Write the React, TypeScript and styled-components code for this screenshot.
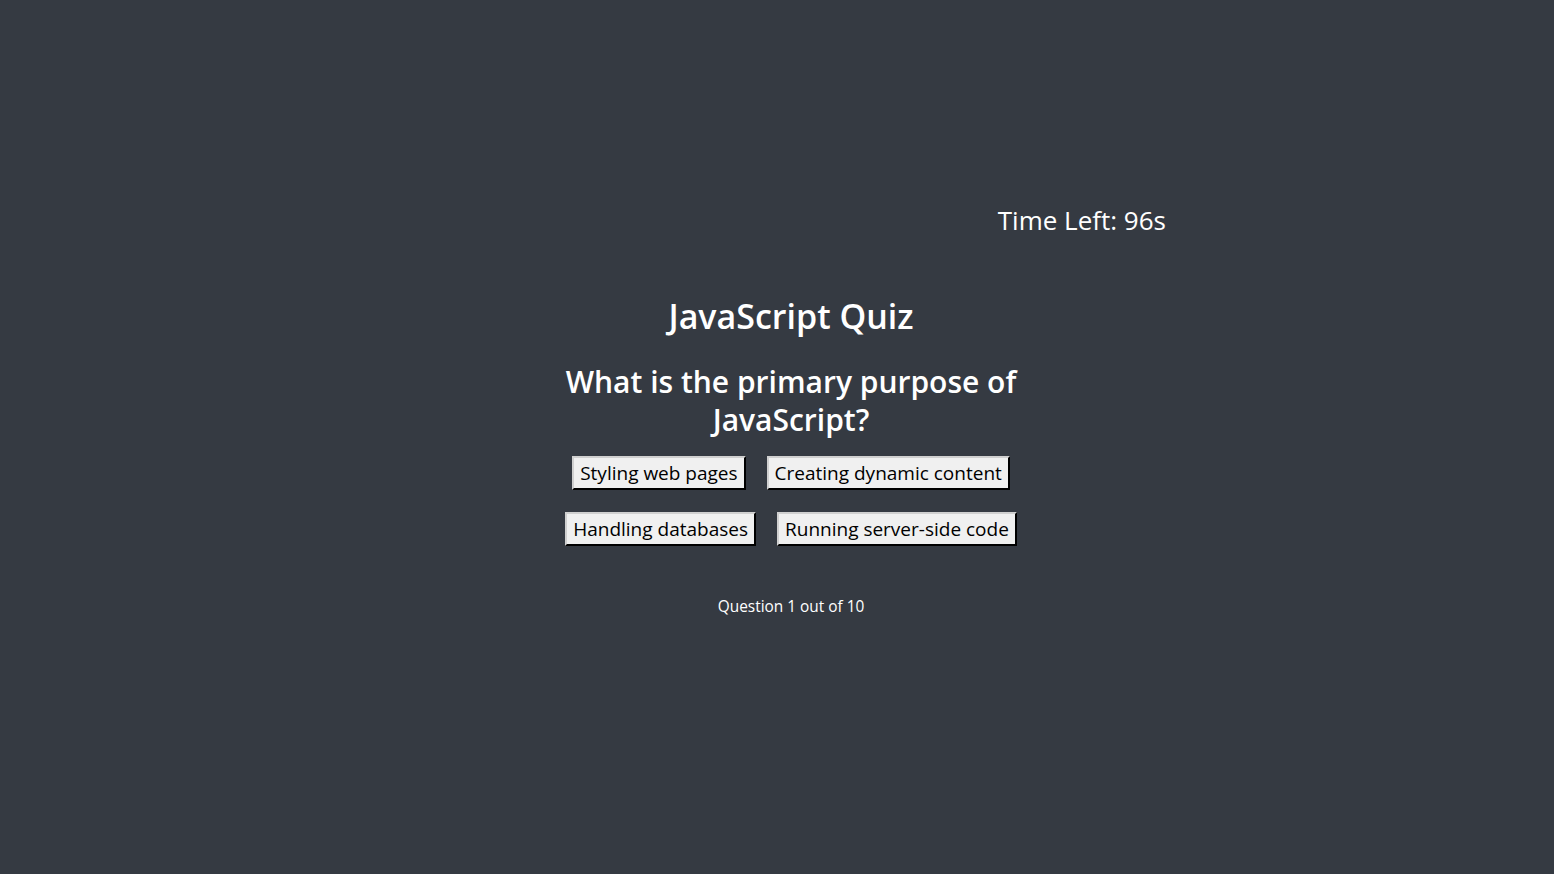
import React from "react";
import styled, { createGlobalStyle } from "styled-components";

const Global = createGlobalStyle`
  html, body { margin: 0; padding: 0; background: #353a42; }
  body { font-family: "Open Sans", "Noto Sans", sans-serif; color: #ffffff; }
`;

const Page = styled.div`
  min-height: 874px;
  background: #353a42;
  display: flex;
  justify-content: center;
  padding-left: 28px;
  box-sizing: border-box;
`;

const Container = styled.div`
  width: 750px;
  padding-top: 202px;
  display: flex;
  flex-direction: column;
  align-items: center;
`;

const Timer = styled.div`
  align-self: flex-end;
  font-size: 26px;
  line-height: 36px;
  margin-bottom: 55px;
`;

const Title = styled.h1`
  margin: 0 0 24px;
  font-size: 34px;
  line-height: 46px;
  font-weight: 600;
`;

const Question = styled.h2`
  margin: 0 0 17px;
  width: 470px;
  text-align: center;
  font-size: 30px;
  line-height: 38px;
  font-weight: 600;
`;

const Options = styled.div`
  display: flex;
  flex-direction: column;
  align-items: center;
`;

const OptionRow = styled.div`
  display: flex;
  gap: 21px;
  margin-bottom: 22px;
`;

const Option = styled.button`
  font-family: inherit;
  font-size: 19px;
  line-height: 26px;
  padding: 2px 6px;
  height: 34px;
  color: #000;
  background: #f0f0f0;
  border: 2px outset #d0d0d0;
  border-right-color: #1a1a1a;
  border-bottom-color: #1a1a1a;
  border-radius: 0;
  cursor: pointer;
`;

const Footer = styled.p`
  margin: 28px 0 0;
  font-size: 15.4px;
`;

export default function App() {
  const rows = [
    ["Styling web pages", "Creating dynamic content"],
    ["Handling databases", "Running server-side code"],
  ];
  return (
    <>
      <Global />
      <Page>
        <Container>
          <Timer>Time Left: 96s</Timer>
          <Title>JavaScript Quiz</Title>
          <Question>What is the primary purpose of JavaScript?</Question>
          <Options>
            {rows.map((r, i) => (
              <OptionRow key={i}>
                {r.map((o) => (
                  <Option key={o}>{o}</Option>
                ))}
              </OptionRow>
            ))}
          </Options>
          <Footer>Question 1 out of 10</Footer>
        </Container>
      </Page>
    </>
  );
}
